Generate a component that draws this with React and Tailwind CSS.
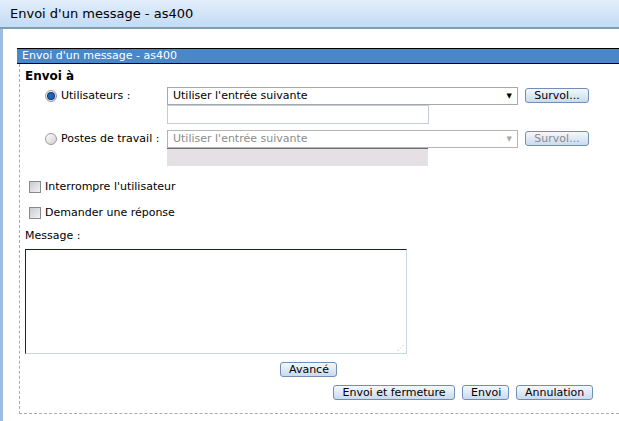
const font = { fontFamily: '"DejaVu Sans", Verdana, sans-serif' };

function Btn({ children, className = "", disabled }) {
  return (
    <button
      className={`h-[15px] rounded-[3px] border border-[#6f8fb4] bg-gradient-to-b from-[#f4f8fd] to-[#c9dbef] px-[8px] text-[11px] leading-[13px] ${
        disabled ? "text-[#8a8a8a]" : "text-black"
      } ${className}`}
    >
      {children}
    </button>
  );
}

function Radio({ checked }) {
  return (
    <span className="flex h-[12px] w-[12px] items-center justify-center rounded-full border border-[#9a9a9a] bg-gradient-to-br from-[#ffffff] to-[#cfcfcf]">
      {checked && <span className="h-[6px] w-[6px] rounded-full bg-[#1d62b5] ring-1 ring-[#0b3a72]" />}
    </span>
  );
}

function Check() {
  return <span className="block h-[12px] w-[12px] border border-[#8a8a8a] bg-gradient-to-br from-[#c8ccd2] to-[#f0f2f4]" />;
}

function Select({ disabled }) {
  return (
    <div
      className={`flex h-[18px] w-[351px] items-center justify-between border ${
        disabled ? "border-[#b4b4b4] text-[#8c8c8c]" : "border-[#a8a8a8] text-black"
      } bg-white pl-[5px] pr-[5px] text-[11px]`}
    >
      <span>Utiliser l'entrée suivante</span>
      <span className={`text-[7px] ${disabled ? "text-[#a8a8a8]" : "text-black"}`}>▼</span>
    </div>
  );
}

export default function App() {
  return (
    <div className="h-[421px] w-[619px] overflow-hidden bg-white text-black" style={font}>
      <div className="flex h-[29px] items-center border-b-2 border-[#7d9fae] bg-gradient-to-b from-[#e2eefb] to-[#c3dbf5] pl-[10px] text-[13px]">
        Envoi d'un message - as400
      </div>
      <div className="h-[392px] border-l-[3px] border-[#9dbde6] pt-[19px]">
        <div className="ml-[14px] flex h-[16px] items-center border-y border-black bg-[#4a87c9] pl-[5px] text-[11px] text-white">
          Envoi d'un message - as400
        </div>
        <div className="ml-[16px] h-[350px] border-b border-l border-dashed border-[#b0a8b0] pl-[5px] text-[11px]">
          <div className="pt-[4px] text-[12px] font-bold leading-[16px]">Envoi à</div>

          <div className="mt-[3px] flex items-start">
            <div className="flex h-[18px] w-[142px] items-center pl-[20px]">
              <Radio checked />
              <span className="ml-[4px]">Utilisateurs :</span>
            </div>
            <div>
              <Select />
              <div className="h-[19px] w-[262px] border border-[#c4cbdc] bg-white" />
            </div>
            <Btn className="ml-[7px] mt-[1px] w-[64px]">Survol...</Btn>
          </div>

          <div className="mt-[6px] flex items-start">
            <div className="flex h-[18px] w-[142px] items-center pl-[20px]">
              <Radio />
              <span className="ml-[4px]">Postes de travail :</span>
            </div>
            <div>
              <Select disabled />
              <div className="h-[18px] w-[261px] border-t border-[#707070] bg-[#e4e0e4]" />
            </div>
            <Btn disabled className="ml-[7px] mt-[1px] w-[64px]">Survol...</Btn>
          </div>

          <div className="mt-[13px] flex items-center pl-[4px]">
            <Check />
            <span className="ml-[4px]">Interrompre l'utilisateur</span>
          </div>
          <div className="mt-[9px] flex items-center pl-[4px]">
            <Check />
            <span className="ml-[4px]">Demander une réponse</span>
          </div>

          <div className="mt-[7px]">Message :</div>
          <div className="relative mt-[4px] h-[105px] w-[382px] border border-b-[#c8d8e0] border-l-[#10263e] border-r-[#c8d8e0] border-t-[#10263e] bg-white">
            <span className="absolute bottom-[1px] right-[2px] text-[7px] leading-none text-[#9aa]">⋰</span>
          </div>

          <div className="mt-[8px] flex pl-[255px]">
            <Btn className="w-[57px]">Avancé</Btn>
          </div>
          <div className="mt-[8px] flex pl-[308px]">
            <Btn className="w-[122px]">Envoi et fermeture</Btn>
            <Btn className="ml-[7px] w-[47px]">Envoi</Btn>
            <Btn className="ml-[7px] w-[77px]">Annulation</Btn>
          </div>
        </div>
      </div>
    </div>
  );
}
